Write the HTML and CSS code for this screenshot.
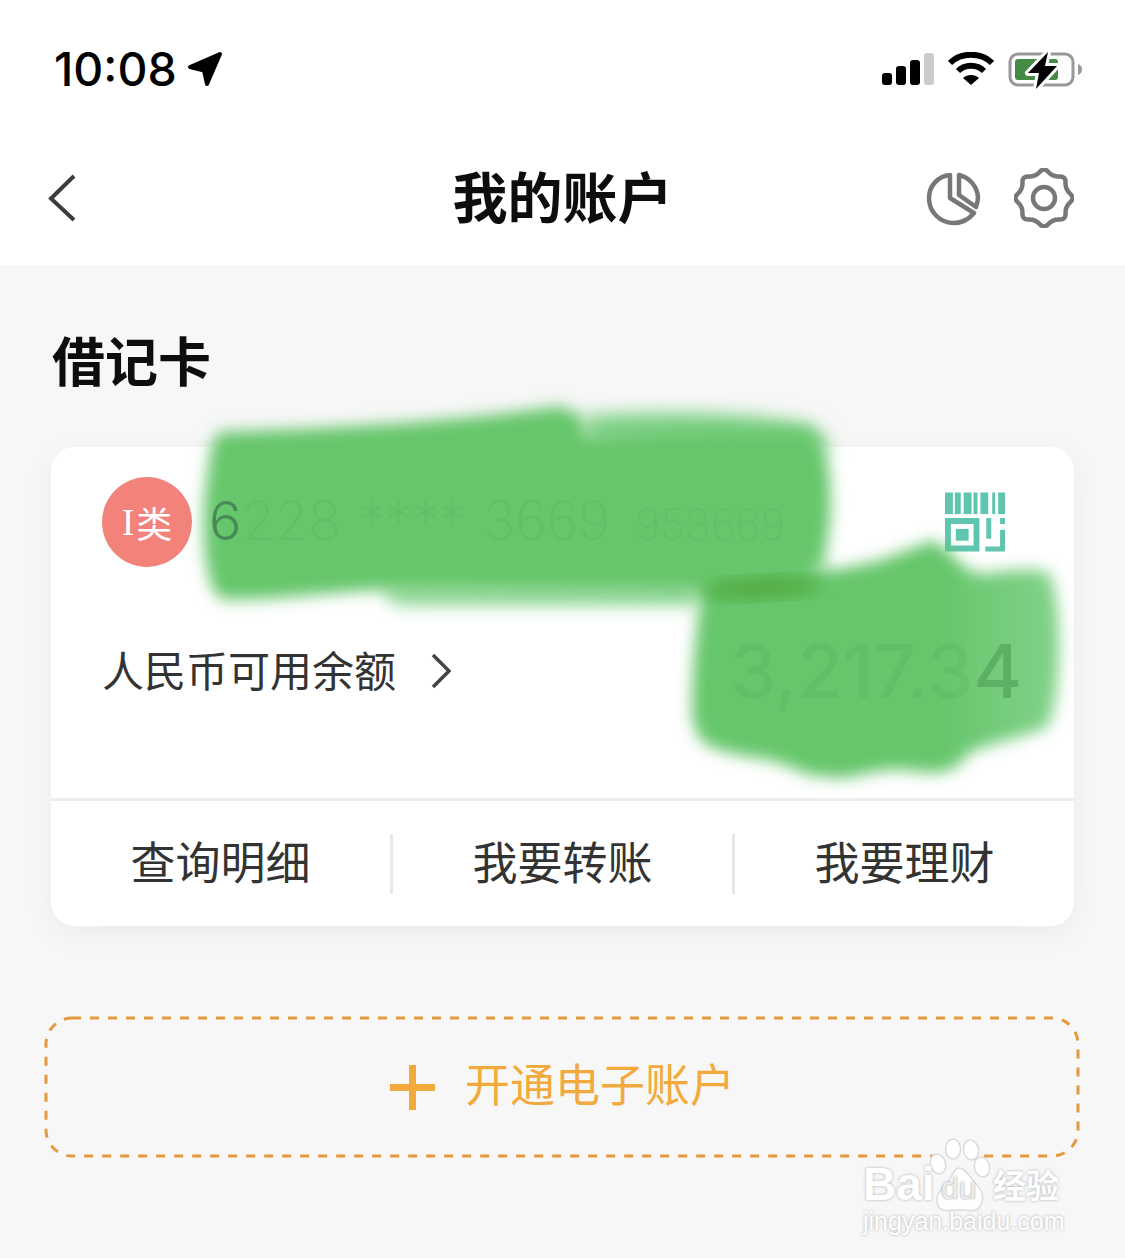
FILE: index.html
```html
<!DOCTYPE html>
<html lang="zh-CN">
<head>
  <meta charset="UTF-8" />
  <meta name="viewport" content="width=device-width, initial-scale=1.0"/>
  <title>我的账户</title>
  <link rel="stylesheet" href="styles.css">
</head>
<body>

  <div class="phone">
    <div class="top">
      <div class="status-bar">
        <div class="status-left">
          <span class="time">10:08</span>
          <svg class="loc" width="36" height="36" viewBox="0 0 36 36"><path d="M33 3 3 16 17 19.500 20 33z" fill="#000" stroke="#000" stroke-width="4" stroke-linejoin="round"/></svg>
        </div>
        <div class="status-right">
          <svg width="52" height="34" viewBox="0 0 52 34">
            <rect x="0" y="21" width="10" height="12" rx="3" fill="#000"/>
            <rect x="14" y="14" width="10" height="19" rx="3" fill="#000"/>
            <rect x="28" y="8" width="10" height="25" rx="3" fill="#000"/>
            <rect x="42" y="1" width="10" height="32" rx="3" fill="#ccc"/>
          </svg>
          <svg width="46" height="34" viewBox="0 0 46 34" fill="none" stroke="#000" stroke-width="6">
            <path d="M2 11C13 0 33 0 44 11"/>
            <path d="M10 19C17 12 29 12 36 19"/>
            <path d="M23 33 15 26C19 22 27 22 31 26Z" fill="#000" stroke="none"/>
          </svg>
          <svg class="battery" width="74" height="40" viewBox="0 0 74 40">
            <rect x="2" y="2" width="63" height="31" rx="8" fill="none" stroke="#999" stroke-width="3"/>
            <rect x="7" y="7" width="43" height="21" rx="3" fill="#458b46"/>
            <path d="M70 12c3 1 4 3 4 5.500s-1 4.500-4 5.500z" fill="#999"/>
            <path d="M40 0 20 21h11l-3 16 21-23H37z" fill="#000" stroke="#fff" stroke-width="6" stroke-linejoin="round" paint-order="stroke"/>
          </svg>
        </div>
      </div>

      <header class="nav">
        <svg class="back" width="30" height="48" viewBox="0 0 30 48"><path d="M27 2 4 24.500 27 46" fill="none" stroke="#3c3c3c" stroke-width="4"/></svg>
        <h1>我的账户</h1>
        <div class="nav-icons">
          <svg width="56" height="56" viewBox="0 0 56 56" fill="none" stroke="#777" stroke-width="4.500" stroke-linejoin="round">
            <path d="M24 5C12 6 3 16 3 28c0 14 11 25 25 25 8 0 15-4 20-10L24 28z"/>
            <path d="M33 5c10 2 18 11 19 22 0 4-1 7-2 10L33 25z"/>
          </svg>
          <svg width="60" height="60" viewBox="0 0 60 60" fill="none" stroke="#777" stroke-width="4.500" stroke-linejoin="round">
            <path d="M25.600 3.900Q30-1 34.400 3.900 38.800 8.800 45.350 8.450 51.900 8.100 51.550 14.650 51.200 21.200 56.100 25.600 61 30 56.100 34.400 51.200 38.800 51.550 45.350 51.900 51.900 45.350 51.550 38.800 51.200 34.400 56.100 30 61 25.600 56.100 21.200 51.200 14.650 51.550 8.100 51.900 8.450 45.350 8.800 38.800 3.900 34.400-1 30 3.900 25.600 8.800 21.200 8.450 14.650 8.100 8.100 14.650 8.450 21.200 8.800 25.600 3.900Z"/>
            <circle cx="30" cy="30" r="11"/>
          </svg>
        </div>
      </header>
    </div>

    <main class="content">
      <h2 class="section-title">借记卡</h2>

      <section class="card">
        <div class="card-no">
          <span class="badge"><i>I</i>类</span>
          <span class="number"><b>6</b>228 **** 3669 <small>953669</small></span>
          <svg class="code" width="60" height="60" viewBox="0 0 61 60" fill="#5fc5b0">
            <rect x="0" y="0" width="8" height="22"/>
            <rect x="10" y="0" width="6" height="22"/>
            <rect x="19" y="0" width="8" height="22"/>
            <rect x="29" y="0" width="4" height="22"/>
            <rect x="36" y="0" width="8" height="22"/>
            <rect x="48" y="0" width="3" height="22"/>
            <rect x="54" y="0" width="7" height="22"/>
            <path d="M0 26h35v34H0zM6 32v22h23V32z"/>
            <rect x="11" y="37" width="13" height="12"/>
            <rect x="42" y="26" width="5" height="21"/>
            <path d="M56 26h5v6h-5zM56 38h5v22H41v-5h15z"/>
          </svg>
        </div>
        <div class="balance">
          <span class="balance-label">人民币可用余额</span>
          <svg width="20" height="36" viewBox="0 0 20 36"><path d="M2 2 18 18 2 34" fill="none" stroke="#444" stroke-width="3.500"/></svg>
          <span class="amount"><em>3,217.3</em>4</span>
        </div>
        <div class="actions">
          <a>查询明细</a>
          <a>我要转账</a>
          <a>我要理财</a>
        </div>
      </section>

      <button class="open-btn">
        <svg class="dash" width="1036" height="142" viewBox="0 0 1036 142"><rect x="2" y="2" width="1032" height="138" rx="26" fill="none" stroke="#e39a3e" stroke-width="3" stroke-dasharray="9 9"/></svg>
        <span class="plus"></span>
        <span class="open-text">开通电子账户</span>
      </button>
    </main>

    <!-- painted-over card details -->
    <svg class="scribble" width="1125" height="800" viewBox="0 0 1125 800">
      <defs>
        <filter id="soft" x="-10%" y="-10%" width="120%" height="120%"><feGaussianBlur stdDeviation="7.500"/></filter>
        <filter id="softer" x="-10%" y="-10%" width="120%" height="120%"><feGaussianBlur stdDeviation="9"/></filter>
        <linearGradient id="fade" gradientUnits="userSpaceOnUse" x1="940" y1="0" x2="1040" y2="0">
          <stop offset="0" stop-color="#66c66c"/>
          <stop offset="1" stop-color="#7dd084"/>
        </linearGradient>
      </defs>
      <g filter="url(#softer)" fill="#7fd186">
        <path d="M585 416C660 410 760 412 815 426L832 452 800 448 585 442Z"/>
        <path d="M380 586 700 586 700 604 395 604Z"/>
      </g>
      <g filter="url(#soft)" fill="#66c66c">
        <path d="M220 432C330 428 450 423 560 406L582 416 585 436C660 428 750 430 805 430 828 440 832 470 830 520L824 565C780 578 720 590 690 592L380 590C330 592 260 602 222 599 203 590 200 520 208 470 210 450 213 438 220 432Z"/>
        <path fill="url(#fade)" d="M703 578C745 570 790 572 827 570 850 568 865 564 880 560 900 554 915 546 932 541 945 546 952 554 960 563 968 570 975 574 985 574 1010 570 1030 568 1048 572 1058 590 1060 630 1058 670 1056 695 1054 717 1046 728 1030 734 1015 738 1000 742 985 746 975 750 968 754 955 772 945 774 920 772 900 768 880 770 860 775 845 780 822 778 800 772 785 762 763 759 745 756 735 754 723 752 712 747 701 742 696 737 692 715 692 670 696 630 703 578Z"/>
      </g>
      <ellipse cx="762" cy="588" rx="60" ry="12" fill="#54af46" filter="url(#soft)" transform="rotate(-3 762 588)"/>
    </svg>

    <div class="watermark">
      <svg class="paw" width="70" height="84" viewBox="0 0 70 84" fill="#fff" stroke="#dcdcdc" stroke-width="1.500">
        <ellipse cx="9" cy="26" rx="7.500" ry="10" transform="rotate(-15 9 26)"/>
        <ellipse cx="24" cy="11" rx="7.500" ry="10"/>
        <ellipse cx="42" cy="12" rx="7.500" ry="10" transform="rotate(-10 42 12)"/>
        <ellipse cx="53" cy="29" rx="7.500" ry="10" transform="rotate(-12 53 29)"/>
        <path d="M30 30C37 30 41 40 47 46 53 52 55 58 53 64 51 72 44 74 38 72H23C16 74 9 72 8 64 7 57 12 51 17 47 22 42 24 30 30 30Z"/>
      </svg>
      <div class="wm-top"><span class="wm-bai">Bai</span><span class="wm-du">du</span><span class="wm-cn">经验</span></div>
      <div class="wm-url">jingyan.baidu.com</div>
    </div>
  </div>

</body>
</html>
```

FILE: styles.css
```css
* { box-sizing: border-box; margin: 0; padding: 0; }
html, body { width: 1125px; height: 1258px; overflow: hidden; }
body { font-family: "Noto Sans CJK SC", "Noto Sans", sans-serif; background: #f7f7f7; color: #333; }
.phone { position: relative; width: 1125px; height: 1258px; }

.top { background: #fff; height: 265px; }

/* Status bar */
.status-bar { height: 130px; padding: 44px 43px 0 54px; display: flex; justify-content: space-between; align-items: flex-start; }
.status-left { display: flex; align-items: center; gap: 10px; }
.time { font-family: Inter, sans-serif; font-size: 46.500px; line-height: 50px; font-weight: 500; color: #000; }
.status-right { display: flex; align-items: flex-start; gap: 14px; padding-top: 8px; }

/* Nav */
.nav { height: 135px; display: flex; align-items: center; justify-content: space-between; padding: 0 51px 0 47px; position: relative; }
.nav h1 { position: absolute; top: 0; left: 0; right: 0; text-align: center; font-size: 55px; font-weight: 700; color: #0d0d0d; line-height: 129px; }
.back { position: relative; }
.nav-icons { display: flex; align-items: center; gap: 32px; position: relative; }

/* Content */
.content { padding: 62px 51px 0; }
.section-title { font-size: 53px; line-height: 64px; font-weight: 700; color: #0d0d0d; margin-left: 1px; }
.card { margin-top: 56px; width: 1023px; height: 479px; background: #fff; border-radius: 24px; box-shadow: 0 8px 30px rgba(0,0,0,0.05); display: flex; flex-direction: column; }

.card-no { height: 180px; padding: 30px 69px 0 51px; display: flex; align-items: flex-start; }
.badge { width: 90px; height: 90px; border-radius: 50%; background: #f2827a; color: #fff; font-size: 36px; display: flex; align-items: center; justify-content: center; flex-shrink: 0; }
.badge i { font-family: "Liberation Serif", serif; font-style: normal; font-size: 38px; margin-right: 2px; }
.number { position: relative; z-index: 3; margin-left: 17px; font-family: Inter, sans-serif; font-weight: 200; font-size: 54px; line-height: 88px; word-spacing: 2px; color: rgba(62,140,78,.12); white-space: nowrap; flex: 1; }
.number b { font-weight: 300; color: #4a8a58; }
.number small { font-size: 43px; margin-left: 8px; }
.code { margin-top: 15px; flex-shrink: 0; }

.balance { height: 171px; padding: 0 52px 0 51px; display: flex; align-items: flex-start; gap: 35px; }
.balance svg { margin-top: 26px; flex-shrink: 0; }
.balance-label { font-size: 42px; line-height: 84px; color: #333; }
.amount { position: relative; z-index: 3; margin-left: auto; font-family: Inter, sans-serif; font-size: 74px; font-weight: 500; line-height: 88px; color: #5cb063; }
.amount em { font-style: normal; color: rgba(62,140,78,.1); }

.actions { flex: 1; border-top: 3px solid #eee; display: grid; grid-template-columns: 342px 342px 339px; align-items: center; }
.actions a { display: block; height: 60px; line-height: 54px; text-align: center; font-size: 45px; color: #333; border-right: 3px solid #e8e8e8; }
.actions a:last-child { border-right: none; }

/* Open account button */
.open-btn { position: relative; margin: 92px 0 0 -5px; width: 1032px; height: 138px; padding-left: 1px; background: none; border: none; display: flex; align-items: center; justify-content: center; gap: 30px; font-family: inherit; font-size: 45px; color: #f3aa3c; }
.open-text { margin-bottom: 10px; }
.dash { position: absolute; left: -2px; top: -2px; }
.plus { width: 45px; height: 45px; flex-shrink: 0; background: linear-gradient(#f3aa3c, #f3aa3c) center / 100% 7px no-repeat, linear-gradient(#f3aa3c, #f3aa3c) center / 7px 100% no-repeat; }

/* Overlays */
.scribble { position: absolute; left: 0; top: 0; z-index: 2; pointer-events: none; }

.watermark { position: absolute; left: 863px; top: 1165px; width: 205px; color: #fff; text-shadow: 0 0 3px #aaa; }
.paw { position: absolute; left: 66px; top: -27px; }
.wm-top { position: relative; display: flex; align-items: center; height: 38px; }
.wm-bai { font-family: "Liberation Sans", sans-serif; font-weight: 700; font-size: 46px; line-height: 38px; width: 78px; }
.wm-du { font-family: "Liberation Sans", sans-serif; font-size: 32px; color: #eee; text-shadow: 0 0 2px #888; width: 52px; padding-top: 8px; }
.wm-cn { font-size: 33px; font-weight: 700; line-height: 38px; white-space: nowrap; }
.wm-url { font-family: "Liberation Sans", sans-serif; font-size: 25px; line-height: 30px; margin-top: 3px; white-space: nowrap; }
```
